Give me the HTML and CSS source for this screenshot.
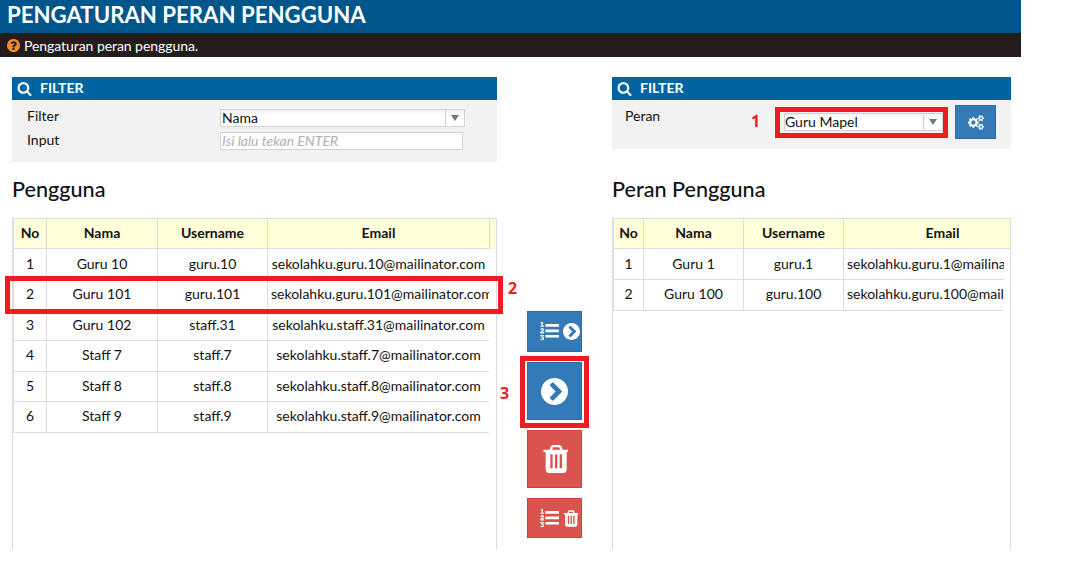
FILE: index.html
```html
<!DOCTYPE html>
<html lang="id">
<head>
  <meta charset="UTF-8" />
  <title>Pengaturan Peran Pengguna</title>
  <link rel="stylesheet" href="styles.css">
</head>
<body>

  <svg class="icon-defs" xmlns="http://www.w3.org/2000/svg">
    <symbol id="i-search" viewBox="0 0 1792 1792"><path d="M1216 832q0-185-131.500-316.500t-316.500-131.500-316.500 131.500-131.500 316.500 131.500 316.500 316.500 131.500 316.500-131.500 131.500-316.500zm512 832q0 52-38 90t-90 38q-54 0-90-38l-343-342q-179 124-399 124-143 0-273.500-55.500t-225-150-150-225-55.500-273.500 55.500-273.500 150-225 225-150 273.500-55.500 273.500 55.500 225 150 150 225 55.500 273.500q0 220-124 399l343 343q37 37 37 90z"/></symbol>
    <symbol id="i-question" viewBox="128 128 1536 1536"><path d="M1024 1376v-192q0-14-9-23t-23-9h-192q-14 0-23 9t-9 23v192q0 14 9 23t23 9h192q14 0 23-9t9-23zm256-672q0-88-55.500-163t-138.500-116-170-41q-243 0-371 213-15 24 8 42l132 100q7 6 19 6 16 0 25-12 53-68 86-92 34-24 86-24 48 0 85.500 26t37.500 59q0 38-20 61t-68 45q-63 28-115.500 86.500t-52.500 125.500v36q0 14 9 23t23 9h192q14 0 23-9t9-23q0-19 21.500-49.500t54.500-49.500q32-18 49-28.500t46-35 44.500-48 28-60.500 12.500-81zm384 192q0 209-103 385.500t-279.500 279.500-385.500 103-385.500-103-279.500-279.500-103-385.500 103-385.500 279.500-279.500 385.500-103 385.500 103 279.500 279.500 103 385.500z"/></symbol>
    <symbol id="i-chevron" viewBox="128 128 1536 1536"><path d="M845 1395l454-454q19-19 19-45t-19-45l-454-454q-19-19-45-19t-45 19l-102 102q-19 19-19 45t19 45l307 307-307 307q-19 19-19 45t19 45l102 102q19 19 45 19t45-19zm819-499q0 209-103 385.500t-279.500 279.500-385.500 103-385.500-103-279.500-279.500-103-385.500 103-385.500 279.500-279.500 385.500-103 385.500 103 279.500 279.500 103 385.500z"/></symbol>
    <symbol id="i-trash" viewBox="128 128 1408 1536"><path d="M704 1376v-704q0-14-9-23t-23-9h-64q-14 0-23 9t-9 23v704q0 14 9 23t23 9h64q14 0 23-9t9-23zm256 0v-704q0-14-9-23t-23-9h-64q-14 0-23 9t-9 23v704q0 14 9 23t23 9h64q14 0 23-9t9-23zm256 0v-704q0-14-9-23t-23-9h-64q-14 0-23 9t-9 23v704q0 14 9 23t23 9h64q14 0 23-9t9-23zm-544-992h448l-48-117q-7-9-17-11h-317q-10 2-17 11zm928 32v64q0 14-9 23t-23 9h-96v948q0 83-47 143.500t-113 60.500h-832q-66 0-113-58.500t-47-141.500v-952h-96q-14 0-23-9t-9-23v-64q0-14 9-23t23-9h309l70-167q15-37 54-63t79-26h320q40 0 79 26t54 63l70 167h309q14 0 23 9t9 23z"/></symbol>
    <symbol id="i-list" viewBox="0 128 1792 1664"><path d="M381 1620q0 80-54.500 126t-135.500 46q-106 0-172-66l57-88q49 45 106 45 29 0 50.500-14.500t21.500-42.500q0-64-105-56l-26-56q8-10 32.500-43.500t42.500-54 37-38.500v-1q-16 0-48.500 1t-48.500 1v53h-106v-152h333v88l-95 115q51 12 81 49t30 88zm2-627v159h-362q-6-36-6-54 0-51 23.500-93t56.500-68 66-47.500 56.500-43.500 23.500-45q0-25-14.500-38.500t-39.500-13.500q-46 0-81 58l-85-59q24-51 71.500-79.500t105.500-28.500q73 0 123 41.500t50 112.500q0 50-34 91.500t-75 64.500-75.500 50.500-35.500 52.500h127v-60h105zm1409 319v192q0 13-9.500 22.500t-22.500 9.500h-1216q-13 0-22.500-9.500t-9.500-22.500v-192q0-14 9-23t23-9h1216q13 0 22.500 9.500t9.500 22.500zm-1408-899v99h-335v-99h107q0-41 .5-122t.5-121v-12h-2q-8 17-50 54l-71-76 136-127h106v404h108zm1408 387v192q0 13-9.500 22.500t-22.500 9.500h-1216q-13 0-22.500-9.500t-9.500-22.500v-192q0-14 9-23t23-9h1216q13 0 22.500 9.500t9.500 22.500zm0-512v192q0 13-9.500 22.500t-22.500 9.500h-1216q-13 0-22.500-9.500t-9.500-22.500v-192q0-13 9.500-22.500t22.500-9.500h1216q13 0 22.500 9.500t9.500 22.500z"/></symbol>
    <symbol id="i-cogs" viewBox="0 0 1920 1792"><path d="M896 896q0-106-75-181t-181-75-181 75-75 181 75 181 181 75 181-75 75-181zm768 512q0-52-38-90t-90-38-90 38-38 90q0 53 37.500 90.500t90.500 37.500 90.500-37.500 37.500-90.500zm0-1024q0-52-38-90t-90-38-90 38-38 90q0 53 37.500 90.500t90.500 37.500 90.500-37.500 37.500-90.500zm-384 421v185q0 10-7 19.500t-16 10.500l-155 24q-11 35-32 76 34 48 90 115 7 11 7 20 0 12-7 19-23 30-82.500 89.500t-78.500 59.500q-11 0-21-7l-115-90q-37 19-77 31-11 108-23 155-7 24-30 24h-186q-11 0-20-7.500t-10-17.500l-23-153q-34-10-75-31l-118 89q-7 7-20 7-11 0-21-8-144-133-144-160 0-9 7-19 10-14 41-53t47-61q-23-44-35-82l-152-24q-10-1-17-9.500t-7-19.500v-185q0-10 7-19.500t16-10.500l155-24q11-35 32-76-34-48-90-115-7-11-7-20 0-12 7-20 22-30 82-89t79-59q11 0 21 7l115 90q34-18 77-32 11-108 23-154 7-24 30-24h186q11 0 20 7.500t10 17.500l23 153q34 10 75 31l118-89q8-7 20-7 11 0 21 8 144 133 144 160 0 8-7 19-12 16-42 54t-45 60q23 48 34 82l152 23q10 2 17 10.500t7 19.500zm640 533v140q0 16-149 31-12 27-30 52 51 113 51 138 0 4-4 7-122 71-124 71-8 0-46-47t-52-68q-20 2-30 2t-30-2q-14 21-52 68t-46 47q-2 0-124-71-4-3-4-7 0-25 51-138-18-25-30-52-149-15-149-31v-140q0-16 149-31 13-29 30-52-51-113-51-138 0-4 4-7 4-2 35-20t59-34 30-16q8 0 46 46.500t52 67.500q20-2 30-2t30 2q51-71 92-112l6-2q4 0 124 70 4 3 4 7 0 25-51 138 17 23 30 52 149 15 149 31zm0-1024v140q0 16-149 31-12 27-30 52 51 113 51 138 0 4-4 7-122 71-124 71-8 0-46-47t-52-68q-20 2-30 2t-30-2q-14 21-52 68t-46 47q-2 0-124-71-4-3-4-7 0-25 51-138-18-25-30-52-149-15-149-31v-140q0-16 149-31 13-29 30-52-51-113-51-138 0-4 4-7 4-2 35-20t59-34 30-16q8 0 46 46.500t52 67.500q20-2 30-2t30 2q51-71 92-112l6-2q4 0 124 70 4 3 4 7 0 25-51 138 17 23 30 52 149 15 149 31z"/></symbol>
  </svg>

  <div class="page">
    <h1 class="page-title">PENGATURAN PERAN PENGGUNA</h1>
    <div class="page-info">
      <svg class="info-icon"><use href="#i-question"/></svg>
      Pengaturan peran pengguna.
    </div>

    <div class="columns">
      <section class="col col-left">
        <div class="panel-head"><svg class="search-icon"><use href="#i-search"/></svg>FILTER</div>
        <div class="panel-body filter-left">
          <div class="form-row">
            <label>Filter</label>
            <div class="combo combo-filter"><span class="combo-text">Nama</span><span class="combo-arrow"></span></div>
          </div>
          <div class="form-row">
            <label>Input</label>
            <input class="text-input" type="text" placeholder="Isi lalu tekan ENTER">
          </div>
        </div>

        <h2 class="list-title">Pengguna</h2>
        <div class="grid-box">
          <div class="grid-head">
            <table class="grid grid-users">
              <tr><th class="c-no">No</th><th class="c-nama">Nama</th><th class="c-user">Username</th><th class="c-email">Email</th></tr>
            </table>
          </div>
          <div class="grid-body">
            <table class="grid grid-users">
              <tr><td class="c-no">1</td><td class="c-nama">Guru 10</td><td class="c-user">guru.10</td><td class="c-email">sekolahku.guru.10@mailinator.com</td></tr>
              <tr><td class="c-no">2</td><td class="c-nama">Guru 101</td><td class="c-user">guru.101</td><td class="c-email">sekolahku.guru.101@mailinator.com</td></tr>
              <tr><td class="c-no">3</td><td class="c-nama">Guru 102</td><td class="c-user">staff.31</td><td class="c-email">sekolahku.staff.31@mailinator.com</td></tr>
              <tr><td class="c-no">4</td><td class="c-nama">Staff 7</td><td class="c-user">staff.7</td><td class="c-email">sekolahku.staff.7@mailinator.com</td></tr>
              <tr><td class="c-no">5</td><td class="c-nama">Staff 8</td><td class="c-user">staff.8</td><td class="c-email">sekolahku.staff.8@mailinator.com</td></tr>
              <tr><td class="c-no">6</td><td class="c-nama">Staff 9</td><td class="c-user">staff.9</td><td class="c-email">sekolahku.staff.9@mailinator.com</td></tr>
            </table>
          </div>
        </div>
      </section>

      <div class="actions">
        <button class="btn btn-blue btn-small"><svg class="ic-list"><use href="#i-list"/></svg><svg class="ic-chev-s"><use href="#i-chevron"/></svg></button>
        <button class="btn btn-blue btn-big"><svg class="ic-chev"><use href="#i-chevron"/></svg></button>
        <button class="btn btn-red btn-big"><svg class="ic-trash"><use href="#i-trash"/></svg></button>
        <button class="btn btn-red btn-small btn-last"><svg class="ic-list"><use href="#i-list"/></svg><svg class="ic-trash-s"><use href="#i-trash"/></svg></button>
      </div>

      <section class="col col-right">
        <div class="panel-head"><svg class="search-icon"><use href="#i-search"/></svg>FILTER</div>
        <div class="panel-body filter-right">
          <label>Peran</label>
          <div class="combo combo-peran"><span class="combo-text">Guru Mapel</span><span class="combo-arrow"></span></div>
          <button class="btn btn-blue btn-cogs"><svg class="ic-cogs"><use href="#i-cogs"/></svg></button>
        </div>

        <h2 class="list-title">Peran Pengguna</h2>
        <div class="grid-box">
          <div class="grid-head">
            <table class="grid grid-roles">
              <tr><th class="c-no">No</th><th class="c-nama">Nama</th><th class="c-user">Username</th><th class="c-email">Email</th></tr>
            </table>
          </div>
          <div class="grid-body">
            <table class="grid grid-roles">
              <tr><td class="c-no">1</td><td class="c-nama">Guru 1</td><td class="c-user">guru.1</td><td class="c-email">sekolahku.guru.1@mailinator.com</td></tr>
              <tr><td class="c-no">2</td><td class="c-nama">Guru 100</td><td class="c-user">guru.100</td><td class="c-email">sekolahku.guru.100@mailinator.com</td></tr>
            </table>
          </div>
        </div>
      </section>
    </div>

    <!-- penanda merah di atas tangkapan layar -->
    <div class="mark mark-1"></div>
    <div class="mark mark-2"></div>
    <div class="mark mark-3"></div>
    <span class="mark-num num-1">1</span>
    <span class="mark-num num-2">2</span>
    <span class="mark-num num-3">3</span>
  </div>

</body>
</html>
```

FILE: styles.css
```css
body {
  margin: 0;
  font-family: Lato, "Open Sans", sans-serif;
  font-size: 14px;
  color: #111;
  background: #fff;
}
.icon-defs {
  width: 0;
  height: 0;
  position: absolute;
}
.page {
  position: relative;
  width: 1079px;
  height: 569px;
  overflow: hidden;
}
.page-title {
  width: 1014px;
  height: 33px;
  margin: 0;
  padding-left: 7px;
  background: #00568a;
  color: #fff;
  font-size: 22.2px;
  font-weight: 700;
  line-height: 30px;
}
.page-info {
  width: 1014px;
  height: 24px;
  padding-left: 7px;
  display: flex;
  align-items: center;
  background: #221d1b;
  color: #fff;
  font-size: 14px;
  letter-spacing: -0.06px;
}
.info-icon {
  width: 13px;
  height: 13px;
  margin-right: 4px;
  fill: #f08a33;
}
.columns {
  display: flex;
  align-items: flex-start;
  padding: 20px 0 0 12px;
}
.col-left {
  width: 485px;
}
.col-right {
  width: 399px;
}
.panel-head {
  height: 23px;
  box-sizing: border-box;
  display: flex;
  align-items: center;
  padding: 0 0 2px 5px;
  background: #0064a0;
  color: #fff;
  font-weight: 700;
  font-size: 14px;
}
.search-icon {
  width: 15px;
  height: 15px;
  margin: 2px 8px 0 0;
  fill: #fff;
}
.panel-body {
  background: #f2f2f2;
}
.filter-left {
  height: 62px;
  padding: 9px 0 0 15px;
  box-sizing: border-box;
}
.form-row {
  display: flex;
  align-items: flex-start;
  height: 23px;
}
.form-row label {
  width: 193px;
  line-height: 13px;
}
.form-row + .form-row label {
  padding-top: 1px;
}
.combo {
  display: flex;
  box-sizing: border-box;
  border: 1px solid #d2d2d2;
  background: linear-gradient(#f3f3f3, #fff 40%);
  font-size: 14px;
}
.combo-text {
  flex: 1;
  padding-left: 1px;
  line-height: 16px;
}
.combo-arrow {
  width: 18px;
  border-left: 1px solid #d2d2d2;
  position: relative;
}
.combo-arrow::after {
  content: "";
  position: absolute;
  left: 5px;
  top: 5px;
  border: 4.5px solid transparent;
  border-top: 6px solid #777;
  border-bottom: 0;
}
.combo-filter {
  width: 245px;
  height: 18px;
}
.text-input {
  width: 243px;
  height: 18px;
  box-sizing: border-box;
  border: 1px solid #d2d2d2;
  padding: 0 1px 2px;
  background: #fff;
  font-family: inherit;
  font-size: 14px;
  font-style: italic;
  outline: none;
}
.text-input::placeholder {
  color: #b0b0b0;
  opacity: 1;
}
.filter-right {
  height: 49px;
  display: flex;
  align-items: flex-start;
  padding-left: 13px;
}
.filter-right label {
  width: 138px;
  padding-top: 7px;
}
.combo-peran {
  width: 159px;
  height: 18px;
  margin: 13px 0 0 21px;
}
.combo-peran .combo-text {
  padding-left: 0;
}
.list-title {
  height: 41px;
  margin: 0;
  padding-top: 15px;
  font-size: 21.6px;
  font-weight: 500;
  line-height: 24px;
}
.col-right .list-title {
  margin-top: 13px;
}
.grid-box {
  height: 331px;
  border: solid #ddd;
  border-width: 1px 1px 0;
}
.grid-head {
  background: #ffffd9;
  height: 30px;
  overflow: hidden;
}
.grid {
  border-collapse: collapse;
  table-layout: fixed;
}
.grid-users {
  width: 476px;
}
.grid-roles {
  width: 428px;
}
.grid th,
.grid td {
  box-sizing: border-box;
  border: 1px solid #ddd;
  padding: 0 3px 2px;
  text-align: center;
  white-space: nowrap;
  overflow: hidden;
}
.grid th {
  height: 29px;
  font-weight: 700;
  border-top: 0;
}
.grid td {
  height: 30.5px;
}
.grid-body tr:first-child td {
  border-top: 0;
}
.grid-body {
  overflow: hidden;
  width: 476px;
}
.col-right .grid-body {
  width: 391px;
}
.c-no {
  width: 33px;
}
.c-nama {
  width: 111px;
}
.c-user {
  width: 110px;
}
.c-email {
  width: 222px;
}
.grid-roles .c-no {
  width: 30px;
}
.grid-roles .c-nama,
.grid-roles .c-user {
  width: 100px;
}
.grid-roles .c-email {
  width: 198px;
}
.actions {
  width: 115px;
  flex: none;
  display: flex;
  flex-direction: column;
  align-items: center;
  gap: 10px;
  padding-top: 234px;
}
.btn {
  display: flex;
  align-items: center;
  justify-content: center;
  box-sizing: border-box;
  padding: 0;
  width: 55px;
  border: 1px solid;
  fill: #fff;
}
.btn-blue {
  background: #337ab7;
  border-color: #2e6da4;
}
.btn-red {
  background: #d9534f;
  border-color: #d43f3a;
}
.btn-big {
  height: 58px;
}
.btn-small {
  height: 41px;
  justify-content: flex-start;
  padding-left: 12px;
}
.btn-last {
  height: 40px;
}
.btn-cogs {
  width: 41px;
  height: 34px;
  margin: 5px 0 0 12px;
}
.ic-list {
  width: 19px;
  height: 19px;
  margin-right: 4px;
}
.ic-chev-s {
  width: 17px;
  height: 17px;
}
.ic-trash-s {
  width: 15px;
  height: 17px;
}
.ic-chev {
  width: 27px;
  height: 27px;
}
.ic-trash {
  width: 26px;
  height: 28px;
}
.ic-cogs {
  width: 16px;
  height: 15px;
}
.mark {
  position: absolute;
  box-sizing: border-box;
  border: 5px solid #ed1c24;
}
.mark-1 {
  left: 775px;
  top: 107px;
  width: 173px;
  height: 31px;
}
.mark-2 {
  left: 5px;
  top: 276px;
  width: 498px;
  height: 38px;
}
.mark-3 {
  left: 520px;
  top: 356px;
  width: 69px;
  height: 72px;
}
.mark-num {
  position: absolute;
  color: #ed1c24;
  font-family: "Open Sans", sans-serif;
  font-size: 16px;
  font-weight: 700;
  line-height: 16px;
}
.num-1 {
  left: 751px;
  top: 113px;
}
.num-2 {
  left: 508px;
  top: 280px;
}
.num-3 {
  left: 500px;
  top: 385px;
}
```
